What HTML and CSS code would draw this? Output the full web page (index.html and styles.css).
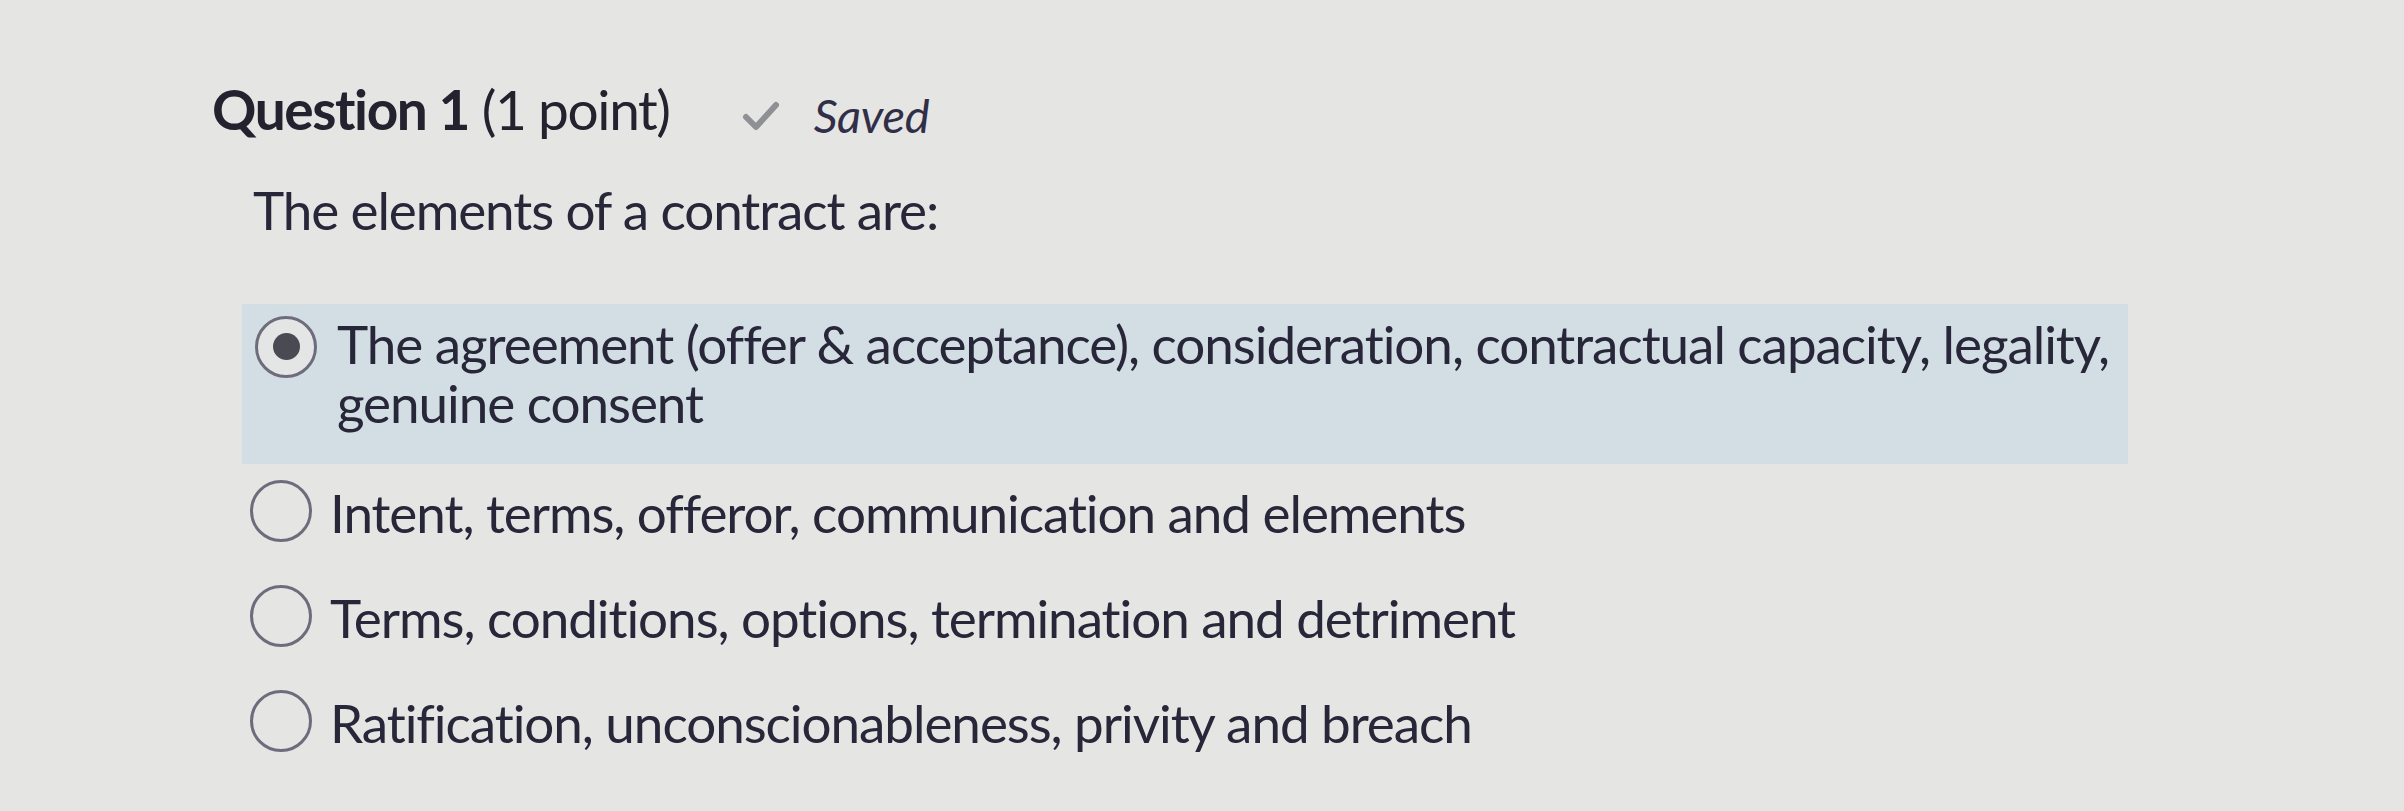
FILE: index.html
```html
<!DOCTYPE html>
<html lang="en">
<head>
<meta charset="utf-8">
<title>Question 1</title>
<link rel="stylesheet" href="styles.css">
</head>
<body>
<main class="page">
  <header class="q-head">
    <h1 class="q-title"><span class="q-num">Question 1</span> <span class="q-pts">(1 point)</span></h1>
    <div class="q-status">
      <svg class="check" viewBox="0 0 38 30" width="38" height="30" aria-hidden="true">
        <path d="M4 16 L14 26 L34 4" fill="none" stroke="#8e9093" stroke-width="6" stroke-linecap="round" stroke-linejoin="round"/>
      </svg>
      <span class="saved">Saved</span>
    </div>
  </header>
  <p class="q-text">The elements of a contract are:</p>
  <div class="options">
    <label class="opt selected">
      <span class="radio checked"><span class="dot"></span></span>
      <span class="opt-text">The agreement (offer &amp; acceptance), consideration, contractual capacity, legality, genuine consent</span>
    </label>
    <label class="opt">
      <span class="radio"></span>
      <span class="opt-text">Intent, terms, offeror, communication and elements</span>
    </label>
    <label class="opt">
      <span class="radio"></span>
      <span class="opt-text">Terms, conditions, options, termination and detriment</span>
    </label>
    <label class="opt">
      <span class="radio"></span>
      <span class="opt-text">Ratification, unconscionableness, privity and breach</span>
    </label>
  </div>
</main>
</body>
</html>
```
FILE: styles.css
```css
html, body {
  margin: 0;
  padding: 0;
}
body {
  background: #e5e5e3;
  color: #28273a;
  font-family: Lato, "Open Sans", sans-serif;
  font-variant-ligatures: none;
  width: 2404px;
  height: 811px;
  overflow: hidden;
}
.page {
  padding: 76px 0 0 212px;
}
.q-head {
  display: flex;
  align-items: baseline;
}
.q-title {
  margin: 0;
  font-size: 55px;
  line-height: 1.2;
  font-weight: 400;
  letter-spacing: -1.4px;
  color: #23222e;
}
.q-num {
  font-weight: 700;
}
.q-status {
  display: flex;
  align-items: center;
  margin-left: 72px;
  gap: 34px;
}
.check {
  display: block;
  position: relative;
  top: 1px;
}
.saved {
  font-style: italic;
  font-size: 47px;
  letter-spacing: -0.3px;
  color: #312e48;
}
.q-text {
  margin: 35px 0 0 41px;
  font-size: 53px;
  line-height: 1.2;
  letter-spacing: -1.1px;
}
.options {
  margin-top: 62px;
  width: 1886px;
  margin-left: 30px;
}
.opt {
  display: flex;
  align-items: flex-start;
  padding: 19px 0 27px 8px;
  font-size: 53px;
  line-height: 59px;
  letter-spacing: -1.05px;
}
.opt.selected {
  background: #d3dee4;
  padding: 10px 4px 32px 13px;
}
.radio {
  flex: none;
  box-sizing: border-box;
  width: 62px;
  height: 62px;
  margin-top: -3px;
  border: 3px solid #6e6c7c;
  border-radius: 50%;
  display: flex;
  align-items: center;
  justify-content: center;
}
.opt.selected .radio {
  margin-top: 2px;
}
.radio.checked {
  background: #e4e6e6;
}
.dot {
  width: 27px;
  height: 27px;
  border-radius: 50%;
  background: #4a4a52;
}
.opt-text {
  margin-left: 18px;
}
.opt.selected .opt-text {
  margin-left: 20px;
}
```
